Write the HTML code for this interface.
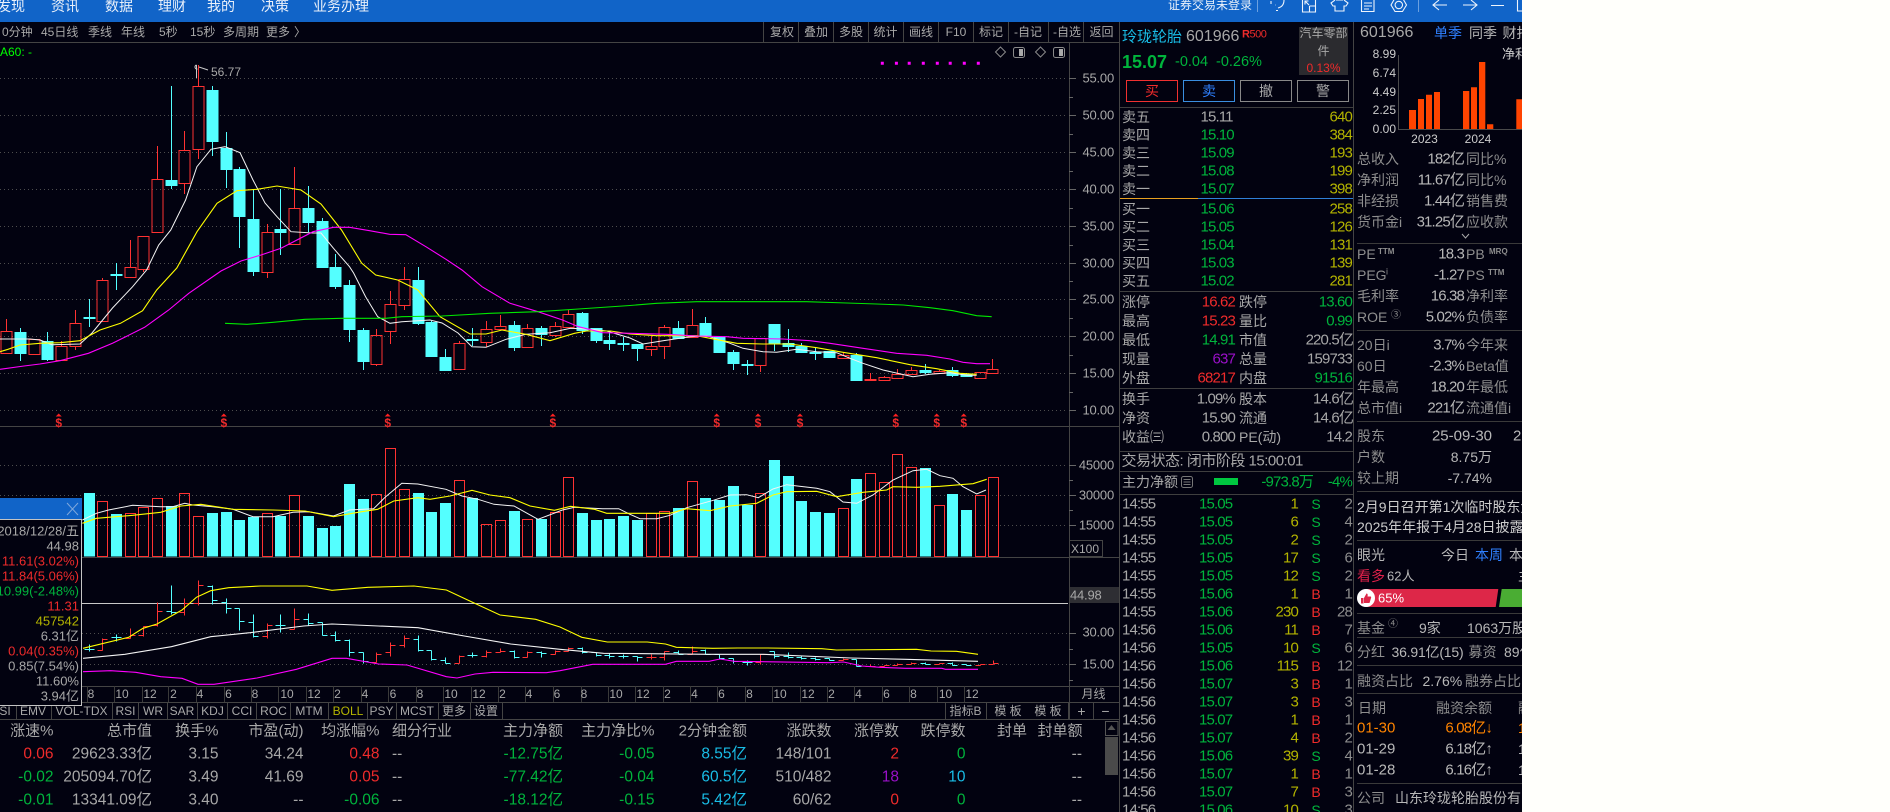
<!DOCTYPE html>
<html lang="zh"><head><meta charset="utf-8"><title>K线</title>
<style>
html,body{margin:0;padding:0;width:1890px;height:812px;overflow:hidden;background:#fffffb}
#p{position:absolute;left:0;top:0;width:1890px;height:812px;overflow:hidden;background:#020210;font-family:"Liberation Sans","Noto Sans CJK SC",sans-serif;font-size:14px;color:#a8a8a8}
#p svg{position:absolute;left:0;top:0}
#p span{position:absolute;white-space:nowrap;line-height:1;transform:translateY(-50%)}
#p span.r{transform:translate(-100%,-50%)}
#p span.c{transform:translate(-50%,-50%)}
.n{font-size:15px;letter-spacing:-.85px}
.sm{font-size:12px}
.m{font-size:13px;letter-spacing:-.2px}
.t{font-size:15.5px}
.tp{font-size:13px}
.d{font-size:12px;font-weight:bold}
.w{color:#e9f0fa}
.g{color:#2bb54a}
.gr{color:#00b43c}
.rd{color:#ef2b2b}
.y{color:#b4b400}
.l{color:#8e8e8e}
.v{color:#b8b8b8}
.b{color:#2f80ff}
.cy{color:#19bde6}
.pu{color:#9a10c8}
.o{color:#ff8400}
#white{position:absolute;left:1522px;top:0;width:368px;height:812px;background:#fffffb;z-index:9}
</style></head><body><div id="p">
<svg width="1522" height="812" viewBox="0 0 1522 812" fill="none">
<rect x="0" y="0" width="1522" height="22" fill="#1164c8"/>
<path d="M0 78.5H1068M0 115.5H1068M0 152.5H1068M0 189.5H1068M0 226.5H1068M0 263.5H1068M0 299.5H1068M0 336.5H1068M0 373.5H1068M0 410.5H1068M0 465.5H1068M0 495.5H1068M0 525.5H1068M82 633.5H1068M82 664.5H1068" stroke="#4d4d4d" stroke-dasharray="1 3"/>
<path id="cr" stroke="#ff3232" shape-rendering="crispEdges"/>
<path id="cc" stroke="#54ffff" fill="#54ffff" shape-rendering="crispEdges"/>
<path id="vr" stroke="#ff3232" shape-rendering="crispEdges"/>
<path id="vc" fill="#54ffff" shape-rendering="crispEdges"/>
<polyline fill="none" stroke="#f4f4f4" stroke-width="1" points="0,339 30,339 40,340 52,344.7 80,344 92,333 112.5,308 132.6,286.7 146.6,270 158.7,245 170.8,230 185.6,200 196.9,166.7 211,149.3 225,146.7 240,152.7 253,180 265,203 277,216.7 291,231.7 313,233 321,233 333.5,248.3 349.5,266.7 353.6,273 365.6,296.7 377.7,316.7 390,323.3 401.8,321.7 430,320 442,323 458,333 472,346.7 486,347.3 506,339.3 526,334.3 550,332.7 570.5,328.3 590.6,329.3 606.7,331 630,338 643,344 663,340.7 690,336.7 706.7,335.7 730,343.3 743,348.3 763,351.7 776.7,352.3 796.7,349.3 816.7,351.7 836.7,352.7 850,358.3 863,363.3 883,370 913,376.7 930,374.3 950,372.7 966.7,375.3 976.7,375.3"/>
<polyline fill="none" stroke="#ffff00" stroke-width="1.1" points="0,351.7 8,349.3 20,345 40,343.3 60,342.7 80,340.7 100,330 120.5,323.3 142.6,310.7 156.7,290 176.8,268 197,231.7 217,203.3 237,190.7 257,189.3 277,186 301,190 321,204 341.5,230 361.6,263 375.7,275 397.7,280 417.8,290 440,316.7 470,334 486,334 502,330 526,334.3 550,340.7 574.5,333.3 586.6,331 610.7,331 630,334 656.7,335.7 696.7,335.7 710,338.3 736.7,343.3 763,344 790,344 816.7,347.7 843,352.3 876.7,357.7 910,364.7 936.7,368.7 960,373.3 976.7,374.3"/>
<polyline fill="none" stroke="#ff00ff" stroke-width="1.1" points="0,369.3 24,366 40,364 60,360.7 88.4,353.3 112.5,343.3 144.6,327.3 168.7,310 188.8,293.3 221,271 241,261 261,255 281,248.3 313,231.7 333.5,227.3 349.5,227.3 369.6,230.7 389.7,234.3 405.8,234.7 425.9,246.7 446,259.3 462,270 482,286.7 510,303.3 538,311.7 562.5,320 578.5,326.7 602.6,332.7 630,333.3 666.7,334.3 696.7,336 726.7,336.7 743,338.3 783,339 810,340.7 830,343.3 863,348.3 896.7,353.3 926.7,355.3 950,359 963,362.3 976.7,363.7 990,363.7"/>
<polyline fill="none" stroke="#00e800" stroke-width="1.1" points="225,323.3 247,324.3 273,322.3 305,319.3 341.5,318.3 385.7,318.3 401.8,316.7 442,316 490,313.3 538,311.7 578.5,309 630,305.5 656.7,303.3 696.7,301.7 806.7,301.7 846.7,303 876.7,304 903.3,305 930,307.7 953,310.7 976.7,315.7 991.7,316.7"/>
<polyline fill="none" stroke="#f4f4f4" stroke-width="1" points="82.4,520 96.4,513.3 108.5,510 132.6,505.3 160.7,506.7 172.8,506.7 184.8,503.3 192.8,505 213,506.7 233,509.3 253,516.7 273,516.7 293,512.3 309,511.7 333.5,516 349.5,510 373.6,508.7 385.7,496.7 401.8,483.3 417.8,484 446,489.3 462,496 478,499.3 494,504.3 514,506 538,519.3 562.5,510 574.5,507.3 602.6,508.7 618.7,508.7 630,514.3 640,518.7 656.7,518.7 670,515.3 686.7,507.7 713.3,500.3 730,495 746.7,494.7 758.3,497.7 773,489 786.7,484.7 816.7,488.3 830,491.7 843,502 856.7,503.3 873,495 893,480 913,470.7 926.7,469.3 940,475.7 953,478.3 963,486.7 976.7,494 986,490"/>
<polyline fill="none" stroke="#ffff00" stroke-width="1.1" points="82.4,523.3 96.4,518.3 132.6,515.3 160.7,512.3 180.8,506 200.9,504.3 233,509.3 273,510 305,511 333.5,516.7 361.6,511.7 377.7,509.3 393.7,501 417.8,497.7 430,499.3 450,496 472,490.3 490,495 510,497.7 530,506 554.4,510.3 570.5,506.3 594.6,509.3 606.7,513.3 630,513.3 670,513.3 686.7,508.7 710,510.7 730,506 756.7,503.3 773,495 786.7,491.7 816.7,491.3 836.7,496.7 863,492.3 886.7,490 893,486.7 916.7,487.3 940,486.3 973,483.7 986.7,479.3"/>
<path d="M82 603.5H1068" stroke="#c9c9c9"/>
<path id="br" stroke="#ff3232" shape-rendering="crispEdges"/>
<path id="bc" stroke="#54ffff" shape-rendering="crispEdges"/>
<polyline fill="none" stroke="#ffff00" stroke-width="1.1" points="83,648.3 128.6,637.3 143,628.3 157,624 182,610 196.4,597.3 210.7,590.7 228.6,587.7 260.7,586 307,586 332,590.3 368,587.3 414,586 446.4,590 471.4,601.7 500,615 535.7,619.3 560,627 581.8,637.3 607.3,642 647.3,642 665.5,644 676.4,647.3 712.7,648.3 738,648 767.3,648 821.8,648.7 836.4,650 916.4,649.3 931,651 956.4,651.3 978,654.3"/>
<polyline fill="none" stroke="#f4f4f4" stroke-width="1.1" points="83,658.3 125,654.3 171.4,646.7 210.7,636.7 250,632.7 303.6,626 332,624 378.6,626 418,627.7 464.3,636 510.7,644 560,649.3 603.6,653.3 709,654.3 763.6,654.3 851,658 905.5,659.3 978,661.3"/>
<polyline fill="none" stroke="#ff00ff" stroke-width="1.1" points="83,671.7 110.7,670.7 135.7,672.3 160.7,676.7 182,678.3 198,684.3 214,684.3 257,678 296.4,669.3 332,658.3 346.4,658.3 378.6,664 407,665 446.4,676.7 457,678 475,674 493,672.3 546.4,672.7 560,670.7 592.7,664.3 665.5,664.3 676.4,661.3 709,661.3 720,659 734.5,661.3 829,662.7 843.6,662 861.8,666 880,667.3 905.5,668.3 941.8,668.3 945.5,669.3 978,669.3"/>
<path d="M880.8 61.8h3v3h-3zM894.9 61.8h3v3h-3zM907.7 61.8h3v3h-3zM921.8 61.8h3v3h-3zM935.8 61.8h3v3h-3zM948.7 61.8h3v3h-3zM962.8 61.8h3v3h-3zM976.8 61.8h3v3h-3z" fill="#ff00ff"/>
<path d="M1000.5 47l5 5-5 5-5-5zM1040.5 47l5 5-5 5-5-5z" stroke="#8a8a8a"/>
<rect x="1013.5" y="47.5" width="11" height="10" rx="2" stroke="#8a8a8a"/><rect x="1019" y="49" width="4" height="7" fill="#aaa"/>
<rect x="1053.5" y="47.5" width="11" height="10" rx="2" stroke="#8a8a8a"/><rect x="1059" y="49" width="4" height="7" fill="#aaa"/>
<path d="M196.5 78V65M199 67l9 3" stroke="#c8c8c8"/><path d="M196.5 65a2 2 0 1 0 1 4" stroke="#c8c8c8" fill="none"/>
<path d="M58.7 413.500l3 3h-6zM223.800 413.500l3 3h-6zM387.700 413.500l3 3h-6zM552.800 413.500l3 3h-6zM716.700 413.500l3 3h-6zM758 413.500l3 3h-6zM800 413.500l3 3h-6zM895.700 413.500l3 3h-6zM936.700 413.500l3 3h-6zM963.700 413.500l3 3h-6z" fill="#ff2020"/>
<path d="M0 42.500H1119M0 426.500H1119M0 557.500H1119M82 686.500H1119M82 702.500H1119M0 719.500H1119M1069.500 42V719M1119.500 22V812M1353.500 22V812" stroke="#444"/>
<path d="M1069 78.500h7M1069 97.500h4M1069 115.500h7M1069 134.500h4M1069 152.500h7M1069 171.500h4M1069 189.500h7M1069 208.500h4M1069 226.500h7M1069 245.500h4M1069 263.500h7M1069 281.500h4M1069 299.500h7M1069 318.500h4M1069 336.500h7M1069 355.500h4M1069 373.500h7M1069 392.500h4M1069 410.500h7M1069 465.500h7M1069 480.500h4M1069 495.500h7M1069 510.500h4M1069 525.500h7M1069 633.500h7M1069 649.500h4M1069 664.500h7M1069 680.500h4" stroke="#666"/>
<rect x="1069.500" y="540.500" width="33" height="16" stroke="#444"/>
<rect x="1070" y="587" width="49" height="16" fill="#2e2e33"/>
<path d="M763.500 22V42M798.500 22V42M833.500 22V42M868.500 22V42M903.500 22V42M938.500 22V42M973.500 22V42M1008.500 22V42M1048.500 22V42M1083.500 22V42" stroke="#444"/>
<path d="M87.500 686v16M114.500 686v16M142.500 686v16M168.500 686v16M196.500 686v16M224.500 686v16M251.500 686v16M278.500 686v16M306.500 686v16M333.500 686v16M361.500 686v16M388.500 686v16M416.500 686v16M443.500 686v16M471.500 686v16M498.500 686v16M525.500 686v16M553.500 686v16M581.500 686v16M608.500 686v16M635.500 686v16M663.500 686v16M690.500 686v16M717.500 686v16M745.500 686v16M772.500 686v16M800.500 686v16M827.500 686v16M854.500 686v16M882.500 686v16M909.500 686v16M937.500 686v16M964.500 686v16" stroke="#3a3a3a"/>
<path d="M16.500 702v17M51.500 702v17M112.500 702v17M138.500 702v17M167.500 702v17M197.500 702v17M227.500 702v17M256.500 702v17M290.500 702v17M328.500 702v17M367.500 702v17M396.500 702v17M438.500 702v17M470.500 702v17M502.500 702v17M945.500 702v17M986.500 702v17M1068.500 702v17M1093.500 702v17" stroke="#444"/>
<rect x="0" y="498" width="82" height="207" fill="#020210"/>
<rect x="0" y="498" width="82" height="21" fill="#1164c8"/>
<path d="M0 519.500H82M81.500 519V705M0 705.500H82" stroke="#c4c4c4"/>
<path d="M67 503l11 12M78 503l-11 12" stroke="#7fa8dc"/>
<rect x="1105.500" y="721.500" width="12.500" height="14" stroke="#555"/><path d="M1111.500 725l4 5h-8z" fill="#555"/>
<rect x="1105" y="737" width="13" height="38" fill="#4a4a4a"/>
<path d="M1120 107.500H1353M1120 291.500H1353M1120 388.500H1353M1120 451.500H1353M1120 471.500H1353M1120 494.500H1353" stroke="#3f3f3f"/>
<path d="M1120 198.500H1198" stroke="#e8a020"/><path d="M1198 198.500H1353" stroke="#2f80d8"/>
<rect x="1299" y="27" width="49" height="48" fill="#2b2b2f"/>
<rect x="1126.500" y="80.500" width="51" height="21" stroke="#f03030"/>
<rect x="1183.500" y="80.500" width="51" height="21" stroke="#3a8ee0"/>
<rect x="1240.500" y="80.500" width="51" height="21" stroke="#888"/>
<rect x="1297.500" y="80.500" width="51" height="21" stroke="#888"/>
<rect x="1181.500" y="476.500" width="11" height="11" rx="2" stroke="#777"/><path d="M1183.500 479.500h7M1183.500 482h7M1183.500 484.500h7" stroke="#777"/>
<rect x="1214" y="478" width="24" height="7" fill="#00c840"/>
<path d="M1398.500 55V129M1398 129.500H1522" stroke="#4a4a4a"/>
<path d="M1409 110h7v19h-7zM1418 99h6v30h-6zM1426 94.700h6V129h-6zM1434 92h6v37h-6zM1463 91h6.300v38H1463zM1471 87.300h6V129h-6zM1479 62h6.300v67H1479zM1487 124.300h6.300V129H1487zM1516.300 99.300h6V129h-6z" fill="#ff4400"/>
<path d="M1357 243.500H1522M1357 330.500H1522M1357 421.500H1522M1357 491.500H1522M1357 540.500H1522M1357 613.500H1522M1357 637.500H1522M1357 665.500H1522M1357 693.500H1522M1357 783.500H1522" stroke="#3a3a3a"/>
<path d="M1462 234l3.500 4 3.500-4" stroke="#aaa"/>
<polygon points="1366,589 1498.300,589 1495.700,607 1366,607" fill="#dd2748"/>
<polygon points="1501.700,589 1522,589 1522,607 1499,607" fill="#4aad33"/>
<circle cx="1366" cy="598" r="9" fill="#fff"/>
<path d="M1361 598h2.500v5.500H1361zM1364 598l2.500-4.500c1 0 1.500 1 1 3h3c.8 0 .8 1 .5 1.500l-1.300 4.500c-.2.500-.5.500-1 .5H1364z" fill="#dd2748"/>
<g stroke="#eef4fc" stroke-width="1.100" fill="none">
<path d="M1271 1v3M1284 0c0 4-2 7-6 8M1275 5h.5M1276 10.500h2"/>
<path d="M1302.500 -2h13v14h-13zM1309.500 6V12M1309.500 6H1316M1305 1l4 4M1305 4.500V1h3.500"/>
<path d="M1335 0l-4 3 2 3h2v5h9V6h2l2-3-4-3M1336 0h7"/>
<path d="M1361.500 -2h12.500v13.500h-12.500zM1364 3h8M1364 6h8M1364 9h5"/>
<path d="M1391 5l4-7h7.500l4 7-4 6.500H1395zM1402.500 5a3.700 3.700 0 1 1-7.400 0 3.700 3.700 0 0 1 7.400 0z"/>
<path d="M1447 5h-14M1439 0l-6 5 6 5M1463 5h14M1471 0l6 5-6 5M1491 5.500h13M1517.500 -2V11h5"/>
</g>
<path d="M1257.500 0v12M1418.500 0v12" stroke="#6ba0e0"/>
</svg>
<span class="w" style="left:-3px;top:6px">发现</span><span class="w" style="left:51px;top:6px">资讯</span><span class="w" style="left:105px;top:6px">数据</span><span class="w" style="left:158px;top:6px">理财</span><span class="w" style="left:207px;top:6px">我的</span><span class="w" style="left:261px;top:6px">决策</span><span class="w" style="left:313px;top:6px">业务办理</span>
<span class="w sm" style="left:1168px;top:5px">证券交易未登录</span>
<span class="sm" style="left:2px;top:32px">0分钟</span><span class="sm" style="left:41px;top:32px">45日线</span><span class="sm" style="left:88px;top:32px">季线</span><span class="sm" style="left:121px;top:32px">年线</span><span class="sm" style="left:159px;top:32px">5秒</span><span class="sm" style="left:190px;top:32px">15秒</span><span class="sm" style="left:223px;top:32px">多周期</span><span class="sm" style="left:266px;top:32px">更多</span><span class="sm" style="left:294px;top:32px">〉</span>
<span class="sm c" style="left:782px;top:32px">复权</span><span class="sm c" style="left:816px;top:32px">叠加</span><span class="sm c" style="left:851px;top:32px">多股</span><span class="sm c" style="left:885.500px;top:32px">统计</span><span class="sm c" style="left:921px;top:32px">画线</span><span class="sm c" style="left:956px;top:32px">F10</span><span class="sm c" style="left:991px;top:32px">标记</span><span class="sm c" style="left:1028px;top:32px">-自记</span><span class="sm c" style="left:1067px;top:32px">-自选</span><span class="sm c" style="left:1101.500px;top:32px">返回</span>
<span class="sm" style="left:0;top:52px;color:#00ff00">A60: -</span>
<span class="sm" style="left:211px;top:72px">56.77</span>
<span class="m r" style="left:1114px;top:78px">55.00</span><span class="m r" style="left:1114px;top:115px">50.00</span><span class="m r" style="left:1114px;top:152px">45.00</span><span class="m r" style="left:1114px;top:189px">40.00</span><span class="m r" style="left:1114px;top:226px">35.00</span><span class="m r" style="left:1114px;top:263px">30.00</span><span class="m r" style="left:1114px;top:299px">25.00</span><span class="m r" style="left:1114px;top:336px">20.00</span><span class="m r" style="left:1114px;top:373px">15.00</span><span class="m r" style="left:1114px;top:410px">10.00</span>
<span class="m r" style="left:1114px;top:465px">45000</span><span class="m r" style="left:1114px;top:495px">30000</span><span class="m r" style="left:1114px;top:525px">15000</span>
<span class="sm" style="left:1071px;top:548.500px">X100</span>
<span class="m" style="left:1070px;top:595px">44.98</span>
<span class="m r" style="left:1114px;top:632px">30.00</span><span class="m r" style="left:1114px;top:664px">15.00</span>
<span class="rd c d" style="left:58.700px;top:423px">$</span><span class="rd c d" style="left:223.800px;top:423px">$</span><span class="rd c d" style="left:387.700px;top:423px">$</span><span class="rd c d" style="left:552.800px;top:423px">$</span><span class="rd c d" style="left:716.700px;top:423px">$</span><span class="rd c d" style="left:758px;top:423px">$</span><span class="rd c d" style="left:800px;top:423px">$</span><span class="rd c d" style="left:895.700px;top:423px">$</span><span class="rd c d" style="left:936.700px;top:423px">$</span><span class="rd c d" style="left:963.700px;top:423px">$</span>
<span class="tp r" style="left:79px;top:531px">2018/12/28/五</span><span class="tp r" style="left:79px;top:546px">44.98</span><span class="tp r rd" style="left:79px;top:561px">11.61(3.02%)</span><span class="tp r rd" style="left:79px;top:576px">11.84(5.06%)</span><span class="tp r gr" style="left:79px;top:591px">10.99(-2.48%)</span><span class="tp r rd" style="left:79px;top:606px">11.31</span><span class="tp r y" style="left:79px;top:621px">457542</span><span class="tp r" style="left:79px;top:636px">6.31亿</span><span class="tp r rd" style="left:79px;top:651px">0.04(0.35%)</span><span class="tp r" style="left:79px;top:666px">0.85(7.54%)</span><span class="tp r" style="left:79px;top:681px">11.60%</span><span class="tp r" style="left:79px;top:696px">3.94亿</span>
<span class="sm c" style="left:91px;top:694px">8</span><span class="sm c" style="left:122px;top:694px">10</span><span class="sm c" style="left:150px;top:694px">12</span><span class="sm c" style="left:173.500px;top:694px">2</span><span class="sm c" style="left:200px;top:694px">4</span><span class="sm c" style="left:228.500px;top:694px">6</span><span class="sm c" style="left:255px;top:694px">8</span><span class="sm c" style="left:287px;top:694px">10</span><span class="sm c" style="left:314px;top:694px">12</span><span class="sm c" style="left:337.500px;top:694px">2</span><span class="sm c" style="left:365px;top:694px">4</span><span class="sm c" style="left:393px;top:694px">6</span><span class="sm c" style="left:420px;top:694px">8</span><span class="sm c" style="left:451px;top:694px">10</span><span class="sm c" style="left:479px;top:694px">12</span><span class="sm c" style="left:502.500px;top:694px">2</span><span class="sm c" style="left:529px;top:694px">4</span><span class="sm c" style="left:557px;top:694px">6</span><span class="sm c" style="left:584px;top:694px">8</span><span class="sm c" style="left:616px;top:694px">10</span><span class="sm c" style="left:643px;top:694px">12</span><span class="sm c" style="left:667.500px;top:694px">2</span><span class="sm c" style="left:694.500px;top:694px">4</span><span class="sm c" style="left:721.500px;top:694px">6</span><span class="sm c" style="left:749.500px;top:694px">8</span><span class="sm c" style="left:780px;top:694px">10</span><span class="sm c" style="left:808px;top:694px">12</span><span class="sm c" style="left:831.500px;top:694px">2</span><span class="sm c" style="left:858.500px;top:694px">4</span><span class="sm c" style="left:886.500px;top:694px">6</span><span class="sm c" style="left:913.500px;top:694px">8</span><span class="sm c" style="left:945.500px;top:694px">10</span><span class="sm c" style="left:972px;top:694px">12</span><span class="sm c" style="left:1093.500px;top:694px">月线</span>
<span class="sm c" style="left:5px;top:711px">SI</span><span class="sm c" style="left:33px;top:711px">EMV</span><span class="sm c" style="left:81.500px;top:711px">VOL-TDX</span><span class="sm c" style="left:125.500px;top:711px">RSI</span><span class="sm c" style="left:153px;top:711px">WR</span><span class="sm c" style="left:182px;top:711px">SAR</span><span class="sm c" style="left:212.500px;top:711px">KDJ</span><span class="sm c" style="left:242px;top:711px">CCI</span><span class="sm c" style="left:273.500px;top:711px">ROC</span><span class="sm c" style="left:309px;top:711px">MTM</span><span class="sm c y" style="left:348px;top:711px">BOLL</span><span class="sm c" style="left:381.500px;top:711px">PSY</span><span class="sm c" style="left:417px;top:711px">MCST</span><span class="sm c" style="left:454px;top:711px">更多</span><span class="sm c" style="left:486px;top:711px">设置</span>
<span class="sm c" style="left:965.500px;top:711px">指标B</span><span class="sm c" style="left:1008px;top:711px">模 板</span><span class="sm c" style="left:1048px;top:711px">模 板</span><span class="c" style="left:1081.500px;top:711px">+</span><span class="c" style="left:1105.500px;top:711px">−</span>
<span class="t r" style="left:53.500px;top:731px;font-size:15px">涨速%</span><span class="t r" style="left:152px;top:731px;font-size:15px">总市值</span><span class="t r" style="left:218.500px;top:731px;font-size:15px">换手%</span><span class="t r" style="left:303.500px;top:731px;font-size:15px">市盈(动)</span><span class="t r" style="left:379.500px;top:731px;font-size:15px">均涨幅%</span><span class="t" style="left:392px;top:731px;font-size:15px">细分行业</span><span class="t r" style="left:563px;top:731px;font-size:15px">主力净额</span><span class="t r" style="left:654.500px;top:731px;font-size:15px">主力净比%</span><span class="t r" style="left:747px;top:731px;font-size:15px">2分钟金额</span><span class="t r" style="left:831.500px;top:731px;font-size:15px">涨跌数</span><span class="t r" style="left:899px;top:731px;font-size:15px">涨停数</span><span class="t r" style="left:965.500px;top:731px;font-size:15px">跌停数</span><span class="t r" style="left:1027px;top:731px;font-size:15px">封单</span><span class="t r" style="left:1082.500px;top:731px;font-size:15px">封单额</span>
<span class="t r rd" style="left:53.500px;top:754px">0.06</span><span class="t r" style="left:152px;top:754px">29623.33亿</span><span class="t r" style="left:218.500px;top:754px">3.15</span><span class="t r" style="left:303.500px;top:754px">34.24</span><span class="t r rd" style="left:379.500px;top:754px">0.48</span><span class="t" style="left:392px;top:754px">--</span><span class="t r gr" style="left:563px;top:754px">-12.75亿</span><span class="t r gr" style="left:654.500px;top:754px">-0.05</span><span class="t r cy" style="left:747px;top:754px">8.55亿</span><span class="t r" style="left:831.500px;top:754px">148/101</span><span class="t r rd" style="left:899px;top:754px">2</span><span class="t r gr" style="left:965.500px;top:754px">0</span><span class="t r" style="left:1082px;top:754px">--</span>
<span class="t r gr" style="left:53.500px;top:777px">-0.02</span><span class="t r" style="left:152px;top:777px">205094.70亿</span><span class="t r" style="left:218.500px;top:777px">3.49</span><span class="t r" style="left:303.500px;top:777px">41.69</span><span class="t r rd" style="left:379.500px;top:777px">0.05</span><span class="t" style="left:392px;top:777px">--</span><span class="t r gr" style="left:563px;top:777px">-77.42亿</span><span class="t r gr" style="left:654.500px;top:777px">-0.04</span><span class="t r cy" style="left:747px;top:777px">60.5亿</span><span class="t r" style="left:831.500px;top:777px">510/482</span><span class="t r pu" style="left:899px;top:777px">18</span><span class="t r cy" style="left:965.500px;top:777px">10</span><span class="t r" style="left:1082px;top:777px">--</span>
<span class="t r gr" style="left:53.500px;top:800px">-0.01</span><span class="t r" style="left:152px;top:800px">13341.09亿</span><span class="t r" style="left:218.500px;top:800px">3.40</span><span class="t r" style="left:303.500px;top:800px">--</span><span class="t r gr" style="left:379.500px;top:800px">-0.06</span><span class="t" style="left:392px;top:800px">--</span><span class="t r gr" style="left:563px;top:800px">-18.12亿</span><span class="t r gr" style="left:654.500px;top:800px">-0.15</span><span class="t r cy" style="left:747px;top:800px">5.42亿</span><span class="t r" style="left:831.500px;top:800px">60/62</span><span class="t r rd" style="left:899px;top:800px">0</span><span class="t r gr" style="left:965.500px;top:800px">0</span><span class="t r" style="left:1082px;top:800px">--</span>

<span class="cy" style="left:1122px;top:37px;font-size:15px">玲珑轮胎</span><span style="left:1186px;top:37px;font-size:16px">601966</span><span class="rd" style="left:1242px;top:35px;font-size:11px;font-weight:bold">R</span><span class="rd" style="left:1249.500px;top:35px;font-size:11px;letter-spacing:-.5px">500</span>
<span class="gr" style="left:1122px;top:62px;font-size:18px;font-weight:bold">15.07</span><span class="gr" style="left:1175px;top:62px;font-size:14.500px">-0.04</span><span class="gr" style="left:1216px;top:62px;font-size:14.500px">-0.26%</span>
<span class="sm c" style="left:1323.500px;top:33px">汽车零部</span><span class="sm c" style="left:1323.500px;top:51px">件</span><span class="sm c rd" style="left:1323.500px;top:68px">0.13%</span>
<span class="c rd" style="left:1152px;top:91px">买</span><span class="c b" style="left:1209px;top:91px">卖</span><span class="c" style="left:1266px;top:91px">撤</span><span class="c" style="left:1323px;top:91px">警</span>

<span style="left:1122px;top:117px">卖五</span><span class="n" style="left:1200.500px;top:117px">15.11</span><span class="n r y" style="left:1352px;top:117px">640</span>
<span style="left:1122px;top:135px">卖四</span><span class="n gr" style="left:1200.500px;top:135px">15.10</span><span class="n r y" style="left:1352px;top:135px">384</span>
<span style="left:1122px;top:153px">卖三</span><span class="n gr" style="left:1200.500px;top:153px">15.09</span><span class="n r y" style="left:1352px;top:153px">193</span>
<span style="left:1122px;top:171px">卖二</span><span class="n gr" style="left:1200.500px;top:171px">15.08</span><span class="n r y" style="left:1352px;top:171px">199</span>
<span style="left:1122px;top:189px">卖一</span><span class="n gr" style="left:1200.500px;top:189px">15.07</span><span class="n r y" style="left:1352px;top:189px">398</span>
<span style="left:1122px;top:209px">买一</span><span class="n gr" style="left:1200.500px;top:209px">15.06</span><span class="n r y" style="left:1352px;top:209px">258</span>
<span style="left:1122px;top:227px">买二</span><span class="n gr" style="left:1200.500px;top:227px">15.05</span><span class="n r y" style="left:1352px;top:227px">126</span>
<span style="left:1122px;top:245px">买三</span><span class="n gr" style="left:1200.500px;top:245px">15.04</span><span class="n r y" style="left:1352px;top:245px">131</span>
<span style="left:1122px;top:263px">买四</span><span class="n gr" style="left:1200.500px;top:263px">15.03</span><span class="n r y" style="left:1352px;top:263px">139</span>
<span style="left:1122px;top:281px">买五</span><span class="n gr" style="left:1200.500px;top:281px">15.02</span><span class="n r y" style="left:1352px;top:281px">281</span>

<span style="left:1122px;top:302px">涨停</span><span class="n r rd" style="left:1235px;top:302px">16.62</span><span style="left:1239px;top:302px">跌停</span><span class="n r gr" style="left:1352px;top:302px">13.60</span>
<span style="left:1122px;top:321px">最高</span><span class="n r rd" style="left:1235px;top:321px">15.23</span><span style="left:1239px;top:321px">量比</span><span class="n r gr" style="left:1352px;top:321px">0.99</span>
<span style="left:1122px;top:340px">最低</span><span class="n r gr" style="left:1235px;top:340px">14.91</span><span style="left:1239px;top:340px">市值</span><span class="n r" style="left:1353px;top:340px">220.5亿</span>
<span style="left:1122px;top:359px">现量</span><span class="n r pu" style="left:1235px;top:359px">637</span><span style="left:1239px;top:359px">总量</span><span class="n r" style="left:1352px;top:359px">159733</span>
<span style="left:1122px;top:378px">外盘</span><span class="n r rd" style="left:1235px;top:378px">68217</span><span style="left:1239px;top:378px">内盘</span><span class="n r gr" style="left:1352px;top:378px">91516</span>
<span style="left:1122px;top:399px">换手</span><span class="n r" style="left:1235px;top:399px">1.09%</span><span style="left:1239px;top:399px">股本</span><span class="n r" style="left:1353px;top:399px">14.6亿</span>
<span style="left:1122px;top:418px">净资</span><span class="n r" style="left:1235px;top:418px">15.90</span><span style="left:1239px;top:418px">流通</span><span class="n r" style="left:1353px;top:418px">14.6亿</span>
<span style="left:1122px;top:437px">收益㈢</span><span class="n r" style="left:1235px;top:437px">0.800</span><span style="left:1239px;top:437px">PE(动)</span><span class="n r" style="left:1352px;top:437px">14.2</span>
<span class="n" style="left:1121.500px;top:461px;letter-spacing:-.5px">交易状态: 闭市阶段 15:00:01</span>
<span style="left:1122px;top:482px">主力净额</span><span class="n r gr" style="left:1313px;top:482px">-973.8万</span><span class="n r gr" style="left:1352px;top:482px">-4%</span>

<span class="n" style="left:1122px;top:504px">14:55</span><span class="n gr" style="left:1199px;top:504px">15.05</span><span class="n r y" style="left:1298px;top:504px">1</span><span class="c gr" style="left:1316px;top:504px">S</span><span class="n r l" style="left:1352px;top:504px">2</span>
<span class="n" style="left:1122px;top:522px">14:55</span><span class="n gr" style="left:1199px;top:522px">15.05</span><span class="n r y" style="left:1298px;top:522px">6</span><span class="c gr" style="left:1316px;top:522px">S</span><span class="n r l" style="left:1352px;top:522px">4</span>
<span class="n" style="left:1122px;top:540px">14:55</span><span class="n gr" style="left:1199px;top:540px">15.05</span><span class="n r y" style="left:1298px;top:540px">2</span><span class="c gr" style="left:1316px;top:540px">S</span><span class="n r l" style="left:1352px;top:540px">2</span>
<span class="n" style="left:1122px;top:558px">14:55</span><span class="n gr" style="left:1199px;top:558px">15.05</span><span class="n r y" style="left:1298px;top:558px">17</span><span class="c gr" style="left:1316px;top:558px">S</span><span class="n r l" style="left:1352px;top:558px">6</span>
<span class="n" style="left:1122px;top:576px">14:55</span><span class="n gr" style="left:1199px;top:576px">15.05</span><span class="n r y" style="left:1298px;top:576px">12</span><span class="c gr" style="left:1316px;top:576px">S</span><span class="n r l" style="left:1352px;top:576px">2</span>
<span class="n" style="left:1122px;top:594px">14:55</span><span class="n gr" style="left:1199px;top:594px">15.06</span><span class="n r y" style="left:1298px;top:594px">1</span><span class="c rd" style="left:1316px;top:594px">B</span><span class="n r l" style="left:1352px;top:594px">1</span>
<span class="n" style="left:1122px;top:612px">14:55</span><span class="n gr" style="left:1199px;top:612px">15.06</span><span class="n r y" style="left:1298px;top:612px">230</span><span class="c rd" style="left:1316px;top:612px">B</span><span class="n r l" style="left:1352px;top:612px">28</span>
<span class="n" style="left:1122px;top:630px">14:56</span><span class="n gr" style="left:1199px;top:630px">15.06</span><span class="n r y" style="left:1298px;top:630px">11</span><span class="c rd" style="left:1316px;top:630px">B</span><span class="n r l" style="left:1352px;top:630px">7</span>
<span class="n" style="left:1122px;top:648px">14:56</span><span class="n gr" style="left:1199px;top:648px">15.05</span><span class="n r y" style="left:1298px;top:648px">10</span><span class="c gr" style="left:1316px;top:648px">S</span><span class="n r l" style="left:1352px;top:648px">6</span>
<span class="n" style="left:1122px;top:666px">14:56</span><span class="n gr" style="left:1199px;top:666px">15.06</span><span class="n r y" style="left:1298px;top:666px">115</span><span class="c rd" style="left:1316px;top:666px">B</span><span class="n r l" style="left:1352px;top:666px">12</span>
<span class="n" style="left:1122px;top:684px">14:56</span><span class="n gr" style="left:1199px;top:684px">15.07</span><span class="n r y" style="left:1298px;top:684px">3</span><span class="c rd" style="left:1316px;top:684px">B</span><span class="n r l" style="left:1352px;top:684px">1</span>
<span class="n" style="left:1122px;top:702px">14:56</span><span class="n gr" style="left:1199px;top:702px">15.07</span><span class="n r y" style="left:1298px;top:702px">3</span><span class="c rd" style="left:1316px;top:702px">B</span><span class="n r l" style="left:1352px;top:702px">3</span>
<span class="n" style="left:1122px;top:720px">14:56</span><span class="n gr" style="left:1199px;top:720px">15.07</span><span class="n r y" style="left:1298px;top:720px">1</span><span class="c rd" style="left:1316px;top:720px">B</span><span class="n r l" style="left:1352px;top:720px">1</span>
<span class="n" style="left:1122px;top:738px">14:56</span><span class="n gr" style="left:1199px;top:738px">15.07</span><span class="n r y" style="left:1298px;top:738px">4</span><span class="c rd" style="left:1316px;top:738px">B</span><span class="n r l" style="left:1352px;top:738px">2</span>
<span class="n" style="left:1122px;top:756px">14:56</span><span class="n gr" style="left:1199px;top:756px">15.06</span><span class="n r y" style="left:1298px;top:756px">39</span><span class="c gr" style="left:1316px;top:756px">S</span><span class="n r l" style="left:1352px;top:756px">4</span>
<span class="n" style="left:1122px;top:774px">14:56</span><span class="n gr" style="left:1199px;top:774px">15.07</span><span class="n r y" style="left:1298px;top:774px">1</span><span class="c rd" style="left:1316px;top:774px">B</span><span class="n r l" style="left:1352px;top:774px">1</span>
<span class="n" style="left:1122px;top:792px">14:56</span><span class="n gr" style="left:1199px;top:792px">15.07</span><span class="n r y" style="left:1298px;top:792px">7</span><span class="c rd" style="left:1316px;top:792px">B</span><span class="n r l" style="left:1352px;top:792px">3</span>
<span class="n" style="left:1122px;top:810px">14:56</span><span class="n gr" style="left:1199px;top:810px">15.06</span><span class="n r y" style="left:1298px;top:810px">10</span><span class="c gr" style="left:1316px;top:810px">S</span><span class="n r l" style="left:1352px;top:810px">3</span>

<span style="left:1360px;top:33px;font-size:16px">601966</span><span class="b" style="left:1434px;top:33px">单季</span><span class="v" style="left:1469px;top:33px">同季</span><span class="v" style="left:1502.500px;top:33px">财报</span>
<span class="sm r" style="left:1396px;top:54px;color:#ccc">8.99</span><span class="sm r" style="left:1396px;top:73px;color:#ccc">6.74</span><span class="sm r" style="left:1396px;top:92px;color:#ccc">4.49</span><span class="sm r" style="left:1396px;top:110px;color:#ccc">2.25</span><span class="sm r" style="left:1396px;top:129px;color:#ccc">0.00</span>
<span class="sm" style="left:1502px;top:54px;color:#ccc;font-size:13px">净利润</span>
<span class="sm c" style="left:1424.500px;top:139px;color:#ccc">2023</span><span class="sm c" style="left:1478px;top:139px;color:#ccc">2024</span>

<span class="l" style="left:1357px;top:159px">总收入</span><span class="v n r" style="left:1464px;top:159px">182亿</span><span class="l" style="left:1466px;top:159px">同比%</span>
<span class="l" style="left:1357px;top:180px">净利润</span><span class="v n r" style="left:1464px;top:180px">11.67亿</span><span class="l" style="left:1466px;top:180px">同比%</span>
<span class="l" style="left:1357px;top:201px">非经损</span><span class="v n r" style="left:1464px;top:201px">1.44亿</span><span class="l" style="left:1466px;top:201px">销售费</span>
<span class="l" style="left:1357px;top:222px">货币金i</span><span class="v n r" style="left:1464px;top:222px">31.25亿</span><span class="l" style="left:1466px;top:222px">应收款</span>
<span class="l" style="left:1357px;top:254px">PE</span><span class="l" style="left:1378px;top:252px;font-size:8px;font-weight:bold">TTM</span><span class="v n r" style="left:1464px;top:254px">18.3</span><span class="l" style="left:1466px;top:254px">PB</span><span class="l" style="left:1489px;top:252px;font-size:8px;font-weight:bold">MRQ</span>
<span class="l" style="left:1357px;top:275px">PEG</span><span class="l" style="left:1386px;top:272px;font-size:9px">i</span><span class="v n r" style="left:1464px;top:275px">-1.27</span><span class="l" style="left:1466px;top:275px">PS</span><span class="l" style="left:1488px;top:273px;font-size:8px;font-weight:bold">TTM</span>
<span class="l" style="left:1357px;top:296px">毛利率</span><span class="v n r" style="left:1464px;top:296px">16.38</span><span class="l" style="left:1466px;top:296px">净利率</span>
<span class="l" style="left:1357px;top:317px">ROE</span><span class="l" style="left:1391px;top:316px;font-size:10px">③</span><span class="v n r" style="left:1464px;top:317px">5.02%</span><span class="l" style="left:1466px;top:317px">负债率</span>
<span class="l" style="left:1357px;top:345px">20日i</span><span class="v n r" style="left:1464px;top:345px">3.7%</span><span class="l" style="left:1466px;top:345px">今年来</span>
<span class="l" style="left:1357px;top:366px">60日</span><span class="v n r" style="left:1464px;top:366px">-2.3%</span><span class="l" style="left:1466px;top:366px">Beta值</span>
<span class="l" style="left:1357px;top:387px">年最高</span><span class="v n r" style="left:1464px;top:387px">18.20</span><span class="l" style="left:1466px;top:387px">年最低</span>
<span class="l" style="left:1357px;top:408px">总市值i</span><span class="v n r" style="left:1464px;top:408px">221亿</span><span class="l" style="left:1466px;top:408px">流通值i</span>
<span class="l" style="left:1357px;top:436px">股东</span><span class="v r" style="left:1492px;top:436px;font-size:15px">25-09-30</span><span class="v" style="left:1513px;top:436px;font-size:15px">25-06-30</span>
<span class="l" style="left:1357px;top:457px">户数</span><span class="v r" style="left:1492px;top:457px">8.75万</span>
<span class="l" style="left:1357px;top:478px">较上期</span><span class="v r" style="left:1492px;top:478px">-7.74%</span>
<span style="left:1357px;top:507px;color:#ccc">2月9日召开第1次临时股东大会</span>
<span style="left:1357px;top:527px;color:#ccc">2025年年报于4月28日披露</span>
<span class="v" style="left:1357px;top:555px">眼光</span><span class="v" style="left:1441px;top:555px">今日</span><span class="b" style="left:1475px;top:555px">本周</span><span class="v" style="left:1509px;top:555px">本月</span>
<span style="left:1357px;top:576px;color:#e0214a">看多</span><span class="v" style="left:1387px;top:576px;font-size:13px">62人</span><span class="v" style="left:1518px;top:576px">主</span>
<span style="left:1378px;top:598px;color:#fff;font-size:13px">65%</span>
<span class="l" style="left:1357px;top:628px">基金</span><span class="l" style="left:1388px;top:625px;font-size:10px">④</span><span class="v" style="left:1419px;top:628px">9家</span><span class="v" style="left:1467px;top:628px">1063万股</span>
<span class="l" style="left:1357px;top:652px">分红</span><span class="v" style="left:1391.500px;top:652px;letter-spacing:-.2px">36.91亿(15)</span><span class="l" style="left:1468.500px;top:652px">募资</span><span class="v" style="left:1504px;top:652px">89亿</span>
<span class="l" style="left:1357px;top:681px">融资占比</span><span class="v" style="left:1422.500px;top:681px">2.76%</span><span class="l" style="left:1465px;top:681px">融券占比</span>
<span class="l" style="left:1358px;top:708px">日期</span><span class="l r" style="left:1492px;top:708px">融资余额</span><span class="l" style="left:1518px;top:708px">融</span>
<span class="o" style="left:1357px;top:728px;font-size:15px">01-30</span><span class="o n r" style="left:1492px;top:728px">6.08亿↓</span><span class="o" style="left:1518px;top:728px">1</span>
<span class="v" style="left:1357px;top:749px;font-size:15px">01-29</span><span class="v n r" style="left:1492px;top:749px">6.18亿↑</span><span class="v" style="left:1518px;top:749px">1</span>
<span class="v" style="left:1357px;top:770px;font-size:15px">01-28</span><span class="v n r" style="left:1492px;top:770px">6.16亿↑</span><span class="v" style="left:1518px;top:770px">1</span>
<span class="l" style="left:1357px;top:798px">公司</span><span class="v" style="left:1395px;top:798px">山东玲珑轮胎股份有限公司</span>
<div id="white"></div>
</div>
<script>
var D="319,331,353,353,r;328,332,353,361,c;339,339,354,354,r;332,341,359,361,c;341,346,360,361,r;310,323,346,350,r;299,317,318,327,c;278,280,321,321,r;263,274,275,290,c;240,267,277,277,r;236,236,269,272,r;146,179,232,233,r;86,180,185,189,c;131,150,183,194,r;65,86,149,159,r;86,90,141,156,c;132,148,169,188,c;167,169,216,248,c;190,219,271,276,c;224,232,272,278,r;189,229,232,255,c;167,208,244,244,r;186,208,222,232,c;218,221,267,268,c;254,267,286,289,c;280,285,329,342,c;328,330,361,370,c;329,335,364,366,r;291,304,331,344,r;267,279,305,310,r;267,280,323,325,c;321,322,356,357,c;349,357,370,371,c;341,343,369,369,r;328,339,340,346,c;321,329,342,347,r;315,326,329,329,r;321,325,347,351,c;324,328,347,347,r;326,328,334,346,c;322,326,335,337,r;310,314,327,327,r;312,313,330,334,c;328,328,340,343,c;332,340,343,350,c;337,343,344,351,c;344,344,348,361,c;336,346,349,356,r;325,327,346,359,r;321,328,338,338,c;309,325,337,337,r;317,323,336,336,c;337,337,352,353,c;350,352,363,370,c;360,364,365,375,c;338,338,365,372,r;324,324,343,351,c;329,343,346,352,c;343,346,352,353,c;348,352,353,360,c;351,351,357,357,c;352,355,358,358,r;353,355,380,381,c;373,379,380,380,r;376,377,380,380,r;369,374,378,378,r;367,370,374,374,r;364,370,372,374,c;370,371,373,373,r;367,370,375,377,c;373,374,376,377,c;372,372,378,378,r;359,369,373,374,r".split(";");
var V=[493,"r501","514","r513","r507","r498",506,"r493","r516",513,512,520,517,"r513",516,"r495",516,528,526,484,499,"r494","r448","r489",493,512,503,"r480",498,"r524","r520",511,"r519",519,"r512","r477",513,520,519,516,520,"r513","r511",508,"r481",498,500,486,505,"r493",460,476,501,512,513,"r508",479,"r473","r482","r454","r467",468,"r505",494,510,"r495","r477"];
var cr="",cc="",vr="",vc="",br="",bc="";
function m(y){return Math.round(583.1+(y-78)*0.2743)+.5}
for(var i=0;i<D.length;i++){
 var k=i-6,a=D[i].split(","),t=+a[0],b=+a[1],e=+a[2],w=+a[3],c=a[4],x=88.5+13.71*k;
 if(k==66)x=991.5;
 var xc=Math.round(x)+.5,l=xc-5.5,p;
 if(c=="r"){
  p="M"+xc+" "+t+"V"+b+"M"+xc+" "+e+"V"+w+"M"+l+" "+(b+.5)+"h11V"+(e+.5)+"h-11z";
  cr+=p;
 }else{
  p="M"+xc+" "+t+"V"+w+"M"+l+" "+(b+.5)+"h11V"+(e+.5)+"h-11z";
  cc+=p;
 }
 if(k>=0){
  var X=Math.round(88.5+13.71*k)+.5;
  var o=m(c=="r"?e:b),cl=m(c=="r"?b:e),q="M"+X+" "+m(t)+"V"+m(w)+"M"+(X-5)+" "+o+"H"+X+"M"+X+" "+cl+"H"+(X+5);
  if(c=="r")br+=q;else bc+=q;
  var v=V[k],red=(typeof v=="string"&&v.charAt(0)=="r"),y=parseInt(red?v.slice(1):v,10),L=Math.round(X-5.5);
  if(red)vr+="M"+(L+.5)+" "+(y+.5)+"h10V556.5h-10z";
  else vc+="M"+L+" "+y+"h11V556.5h-11z";
 }
}
function s(i,d){document.getElementById(i).setAttribute("d",d)}
s("cr",cr);s("cc",cc);s("vr",vr);s("vc",vc);s("br",br);s("bc",bc);
</script>
</body></html>
